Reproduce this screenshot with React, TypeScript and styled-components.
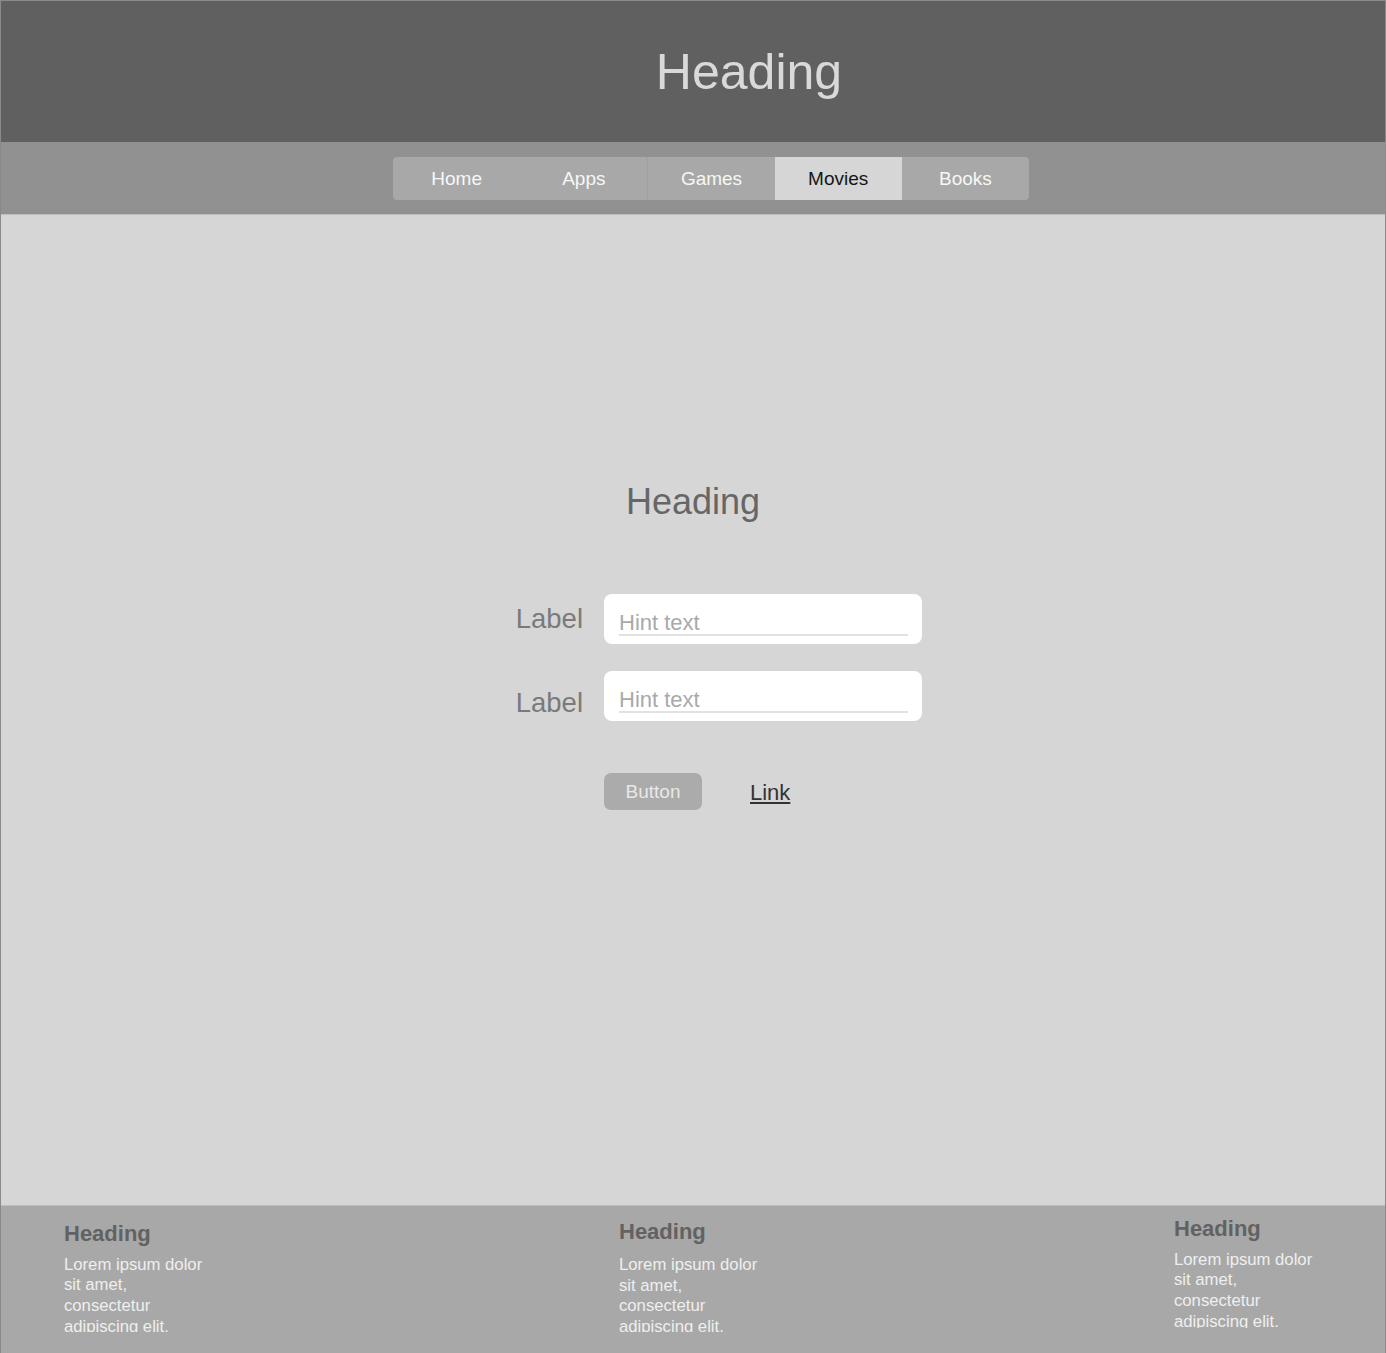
import React from "react";
import styled, { createGlobalStyle } from "styled-components";

const Global = createGlobalStyle`
  html, body { margin: 0; padding: 0; background: #d6d6d6; }
  * { box-sizing: border-box; }
  body { font-family: "Liberation Sans", Arial, sans-serif; }
`;

const Frame = styled.div`
  width: 1386px;
  border: 1px solid #8a8a8a;
  border-bottom: none;
  display: flex;
  flex-direction: column;
`;

const Header = styled.header`
  height: 141px;
  background: #606060;
  display: flex;
  align-items: center;
  justify-content: center;
  padding-left: 112px;
  padding-top: 1px;
`;

const Title = styled.h1`
  margin: 0;
  font-size: 50px;
  font-weight: 400;
  color: #d9d9d9;
  line-height: normal;
`;

const Nav = styled.nav`
  height: 73px;
  background: #919191;
  border-bottom: 1px solid #bdbdbd;
  display: flex;
  align-items: flex-start;
  justify-content: center;
  padding-left: 36px;
  padding-top: 15px;
`;

const Tabs = styled.div`
  display: flex;
  height: 43px;
  background: #a8a8a8;
  border-radius: 4px;
  overflow: hidden;
`;

const Tab = styled.div<{ $active?: boolean; $sep?: boolean }>`
  width: 127.2px;
  display: flex;
  align-items: center;
  justify-content: center;
  font-size: 19px;
  color: ${(p) => (p.$active ? "#151515" : "#f7f7f7")};
  background: ${(p) => (p.$active ? "#d6d6d6" : "transparent")};
  border-left: ${(p) => (p.$sep ? "1px solid #a1a1a1" : "none")};
`;

const Main = styled.main`
  height: 990px;
  background: #d6d6d6;
  display: flex;
  flex-direction: column;
  align-items: center;
  padding-top: 266px;
`;

const SubTitle = styled.h2`
  margin: 0 0 72px 0;
  font-size: 36px;
  font-weight: 400;
  color: #666666;
  line-height: 41px;
`;

const Form = styled.div`
  display: grid;
  grid-template-columns: 119px 318px;
  column-gap: 21px;
  row-gap: 27px;
`;

const Label = styled.div<{ $nudge?: number }>`
  font-size: 27.5px;
  line-height: 32px;
  color: #7a7a7a;
  text-align: right;
  align-self: center;
  margin-top: ${(p) => (p.$nudge ? `${p.$nudge * 2}px` : "0")};
`;

const Field = styled.div`
  height: 50px;
  background: #ffffff;
  border-radius: 8px;
  padding: 17px 14px 0 15px;
`;

const Hint = styled.div`
  font-size: 22px;
  line-height: 24px;
  color: #a9a9a9;
  border-bottom: 2px solid #e2e2e2;
  height: 25px;
`;

const Actions = styled.div`
  grid-column: 2;
  display: flex;
  align-items: center;
  gap: 48px;
  margin-top: 25px;
`;

const Button = styled.button`
  width: 98px;
  height: 37px;
  border: none;
  border-radius: 7px;
  background: #ababab;
  color: #e8e8e8;
  font-family: "Liberation Sans", Arial, sans-serif;
  font-size: 19px;
  padding: 0;
`;

const Link = styled.a`
  font-size: 22px;
  color: #333333;
  text-decoration: underline;
  text-underline-offset: 2px;
  margin-top: 3px;
`;

const Footer = styled.footer`
  height: 149px;
  background: #a8a8a8;
  border-top: 1px solid #bdbdbd;
  display: flex;
  justify-content: space-between;
  padding: 0 63px;
`;

const Column = styled.div<{ $top: number; $height: number }>`
  width: 148px;
  height: ${(p) => p.$height}px;
  overflow: hidden;
  margin-top: ${(p) => p.$top}px;
`;

const ColHeading = styled.h3<{ $gap: number }>`
  margin: 0 0 ${(p) => p.$gap}px 0;
  font-size: 22px;
  font-weight: 700;
  line-height: 25px;
  color: #626262;
`;

const ColText = styled.p`
  margin: 0;
  font-size: 16.7px;
  line-height: 20.7px;
  color: #efefef;
`;

const tabs = ["Home", "Apps", "Games", "Movies", "Books"];
const columns = [
  { top: 14.5, gap: 9, height: 111 },
  { top: 13, gap: 11, height: 113 },
  { top: 9.5, gap: 9, height: 112.5 },
];

export default function App() {
  return (
    <>
      <Global />
      <Frame>
        <Header>
          <Title>Heading</Title>
        </Header>
        <Nav>
          <Tabs>
            {tabs.map((t) => (
              <Tab key={t} $active={t === "Movies"} $sep={t === "Games"}>
                {t}
              </Tab>
            ))}
          </Tabs>
        </Nav>
        <Main>
          <SubTitle>Heading</SubTitle>
          <Form>
            <Label>Label</Label>
            <Field>
              <Hint>Hint text</Hint>
            </Field>
            <Label $nudge={7}>Label</Label>
            <Field>
              <Hint>Hint text</Hint>
            </Field>
            <Actions>
              <Button>Button</Button>
              <Link href="#">Link</Link>
            </Actions>
          </Form>
        </Main>
        <Footer>
          {columns.map((c, i) => (
            <Column key={i} $top={c.top} $height={c.height}>
              <ColHeading $gap={c.gap}>Heading</ColHeading>
              <ColText>Lorem ipsum dolor sit amet, consectetur adipiscing elit.</ColText>
            </Column>
          ))}
        </Footer>
      </Frame>
    </>
  );
}
